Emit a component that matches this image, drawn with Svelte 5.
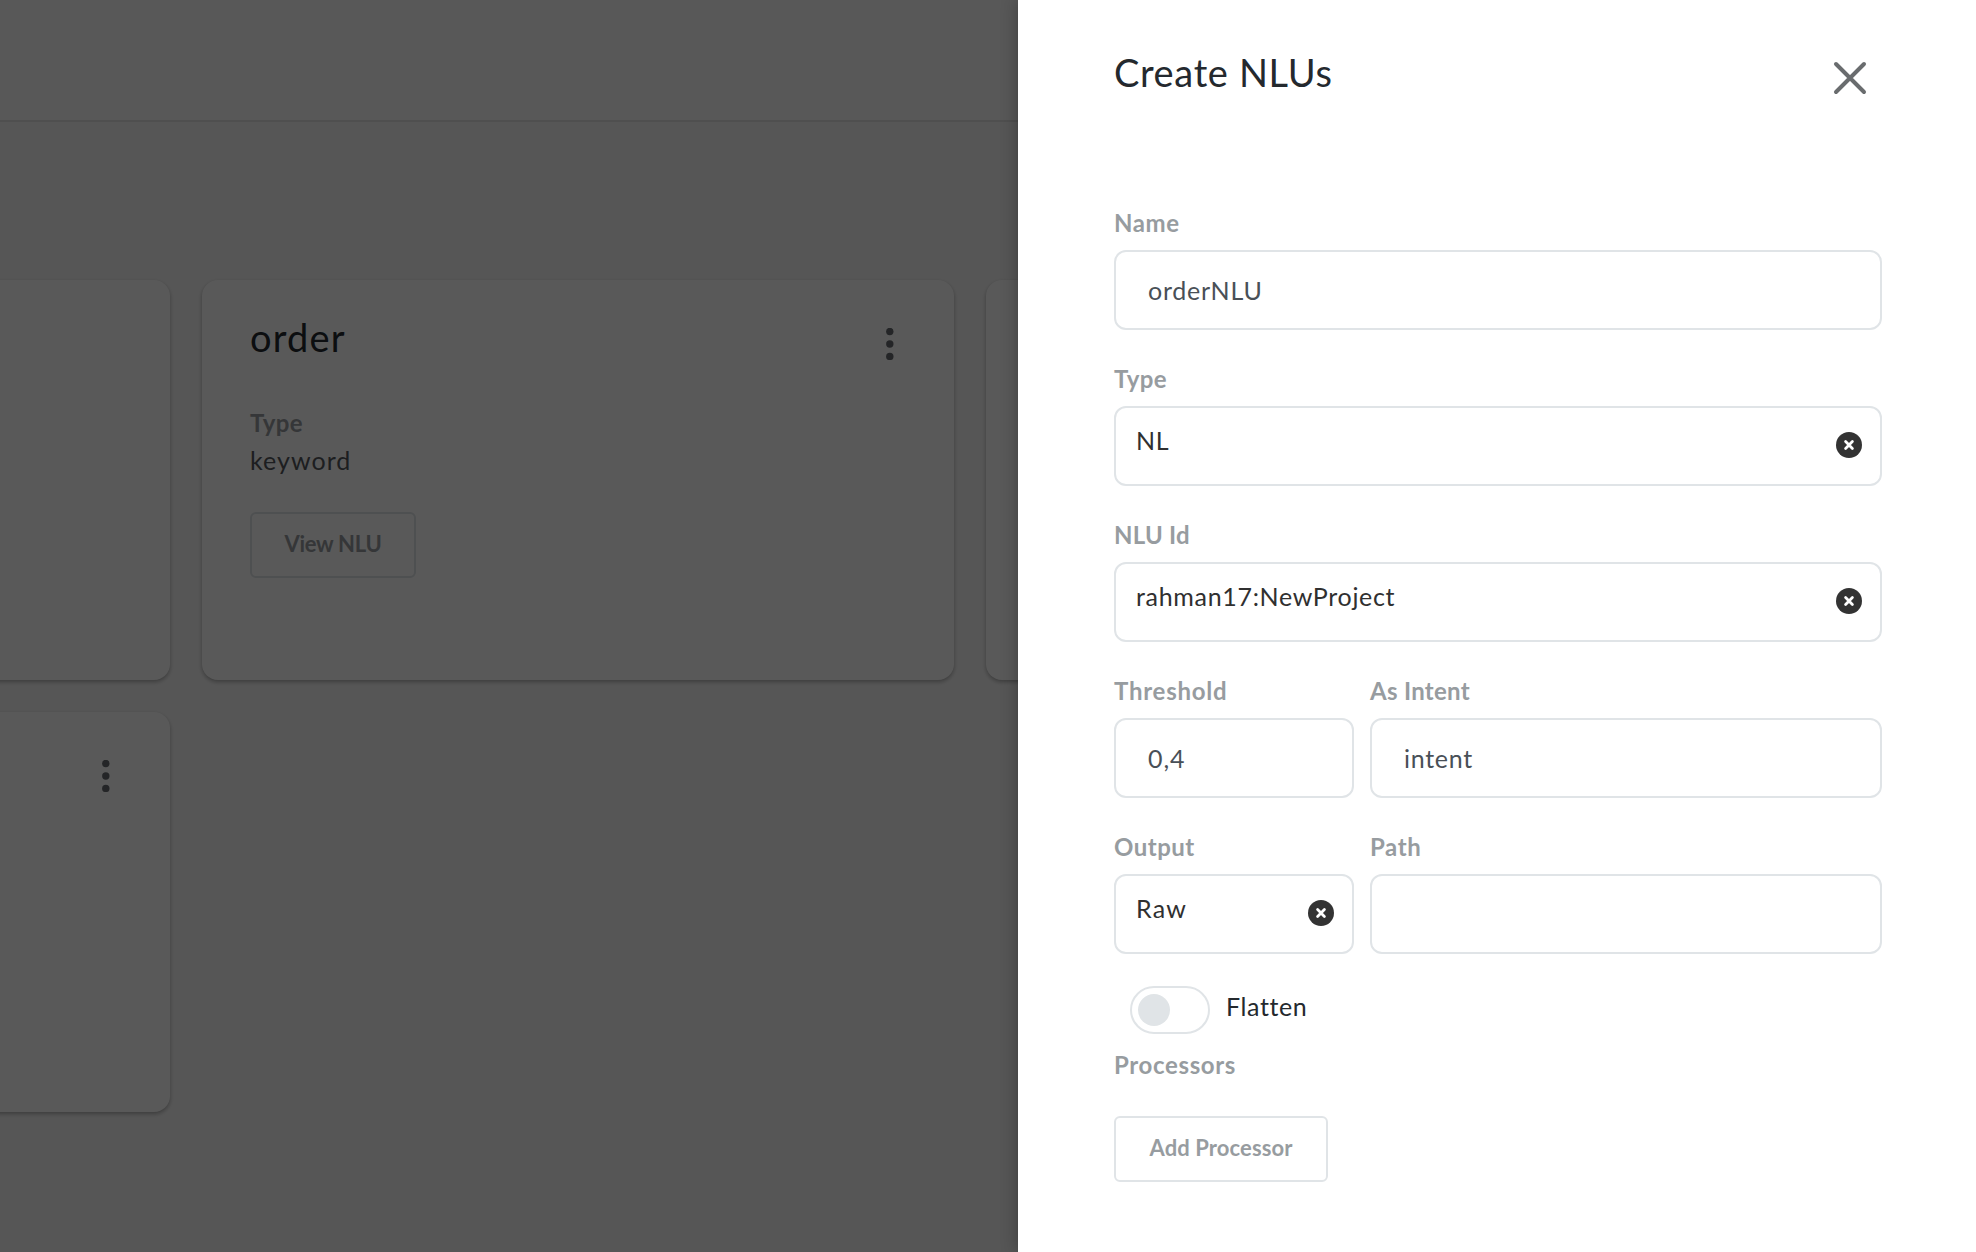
<script>
  const rows = [
    [{ label: 'Name', lt: 0.6, value: 'orderNLU', vt: 0.75, kind: 'input' }],
    [{ label: 'Type', lt: 0.4, value: 'NL', vt: 0.6, kind: 'select' }],
    [{ label: 'NLU Id', lt: 0.2, value: 'rahman17:NewProject', vt: 0.68, kind: 'select' }],
    [
      { label: 'Threshold', lt: 0.75, value: '0,4', vt: 0.9, kind: 'input' },
      { label: 'As Intent', lt: 0.3, value: 'intent', vt: 0.7, kind: 'input' }
    ],
    [
      { label: 'Output', lt: 0.5, value: 'Raw', vt: 1.2, kind: 'select' },
      { label: 'Path', lt: 0.6, value: '', vt: 0, kind: 'input' }
    ]
  ];
</script>

{#snippet dots()}
  <svg class="dots" width="32" height="32" viewBox="0 0 32 32">
    <circle cx="15.8" cy="3.5" r="3.7" />
    <circle cx="15.8" cy="16" r="3.7" />
    <circle cx="15.8" cy="28.4" r="3.7" />
  </svg>
{/snippet}

<div class="screen">
  <div class="page">
    <header class="topbar"></header>
    <main class="cards">
      <article class="card"></article>
      <article class="card">
        <div class="card-head">
          <h2>order</h2>
          {@render dots()}
        </div>
        <div class="card-label">Type</div>
        <div class="card-value">keyword</div>
        <button class="btn view">View NLU</button>
      </article>
      <article class="card"></article>
      <article class="card">
        <div class="card-head"><h2></h2>{@render dots()}</div>
      </article>
    </main>
  </div>
  <div class="overlay"></div>

  <aside class="panel">
    <div class="panel-head">
      <h1>Create NLUs</h1>
      <svg class="close" width="36" height="36" viewBox="0 0 36 36">
        <path d="M4 4 32 32M32 4 4 32" />
      </svg>
    </div>

    {#each rows as row}
      <div class="row" class:split={row.length > 1}>
        {#each row as f}
          <div class="field">
            <div class="label" style:letter-spacing="{f.lt}px">{f.label}</div>
            <div class="box {f.kind}">
              <span style:letter-spacing="{f.vt}px">{f.value}</span>
              {#if f.kind === 'select'}
                <svg class="clear" width="26" height="26" viewBox="0 0 26 26">
                  <circle cx="13" cy="13" r="13" />
                  <path d="M9.6 9.6 16.4 16.4M16.4 9.6 9.6 16.4" />
                </svg>
              {/if}
            </div>
          </div>
        {/each}
      </div>
    {/each}

    <div class="toggle-row">
      <div class="toggle"><div class="knob"></div></div>
      <span>Flatten</span>
    </div>
    <div class="label processors">Processors</div>
    <button class="btn add">Add Processor</button>
  </aside>
</div>

<style>
  :global(body) {
    margin: 0;
    overflow: hidden;
  }
  .screen {
    position: relative;
    width: 1976px;
    height: 1252px;
    overflow: hidden;
    font-family: Lato, 'Open Sans', sans-serif;
    color: #24292e;
  }
  .screen * {
    box-sizing: border-box;
  }
  .page {
    height: 1252px;
    background: #f7f7f7;
  }
  .topbar {
    height: 122px;
    background: #fbfbfb;
    border-bottom: 2px solid #e2e2e2;
  }
  .cards {
    display: grid;
    grid-template-columns: repeat(3, 752px);
    grid-auto-rows: 400px;
    gap: 32px;
    margin: 158px 0 0 -582px;
  }
  .card {
    padding: 32px 48px;
    background: #fff;
    border-radius: 16px;
    box-shadow: 0 2px 4px rgba(0, 0, 0, 0.3);
  }
  .card-head {
    display: flex;
    justify-content: space-between;
  }
  h1,
  h2 {
    margin: 0;
    font-size: 38px;
    font-weight: 400;
  }
  h2 {
    height: 50px;
    line-height: 50px;
    letter-spacing: 1.2px;
  }
  .dots {
    margin-top: 16px;
    fill: #686c70;
  }
  .card-label {
    margin-top: 46px;
    font-size: 24px;
    line-height: 30px;
    font-weight: 700;
    letter-spacing: 0.4px;
    color: #979ca0;
  }
  .card-value {
    margin-top: 3px;
    font-size: 25px;
    line-height: 38px;
    letter-spacing: 1.05px;
    color: #54585c;
  }
  .btn {
    display: block;
    height: 66px;
    padding: 0 0 2px;
    background: transparent;
    border: 2px solid #e0e4e7;
    border-radius: 6px;
    font: 700 22px/30px Lato, 'Open Sans', sans-serif;
    color: #979ca0;
    white-space: nowrap;
  }
  .view {
    width: 166px;
    margin-top: 33px;
    letter-spacing: -0.3px;
  }
  .add {
    width: 214px;
    margin-top: 36px;
    letter-spacing: 0.1px;
  }
  .overlay {
    position: absolute;
    inset: 0;
    background: rgba(0, 0, 0, 0.65);
  }
  .panel {
    position: absolute;
    top: 0;
    right: 0;
    width: 958px;
    height: 1252px;
    padding: 48px 94px 0 96px;
    background: #fff;
    box-shadow: 0 0 16px rgba(0, 0, 0, 0.3);
  }
  .panel-head {
    display: flex;
    justify-content: space-between;
    height: 160px;
  }
  h1 {
    line-height: 48px;
    letter-spacing: 0.65px;
  }
  .close {
    margin: 12px 14px 0 0;
    fill: none;
    stroke: #696c6e;
    stroke-width: 4;
    stroke-linecap: round;
  }
  .row {
    display: grid;
    gap: 16px;
    margin-bottom: 34px;
  }
  .split {
    grid-template-columns: 240px 1fr;
  }
  .label {
    height: 30px;
    font-size: 24px;
    line-height: 30px;
    font-weight: 700;
    color: #979ca0;
  }
  .box {
    display: flex;
    align-items: center;
    justify-content: space-between;
    height: 80px;
    margin-top: 12px;
    padding: 0 18px 0 32px;
    border: 2px solid #e0e4e7;
    border-radius: 12px;
    font-size: 25px;
    line-height: 30px;
    color: #495057;
  }
  .select {
    padding-left: 20px;
    color: #303030;
  }
  .select span {
    margin-bottom: 12px;
  }
  .clear circle {
    fill: #333;
  }
  .clear path {
    fill: none;
    stroke: #fff;
    stroke-width: 2.8;
    stroke-linecap: round;
  }
  .clear {
    margin-bottom: 2px;
  }
  .toggle-row {
    display: flex;
    align-items: center;
    gap: 16px;
    margin: -2px 0 16px 16px;
    font-size: 25px;
    line-height: 30px;
    letter-spacing: 0.6px;
  }
  .toggle-row span {
    margin-bottom: 8px;
  }
  .toggle {
    width: 80px;
    height: 48px;
    padding: 6px;
    border: 2px solid #e0e4e7;
    border-radius: 24px;
  }
  .knob {
    width: 32px;
    height: 32px;
    border-radius: 50%;
    background: #e0e4e7;
  }
  .processors {
    letter-spacing: 0.65px;
  }
</style>
